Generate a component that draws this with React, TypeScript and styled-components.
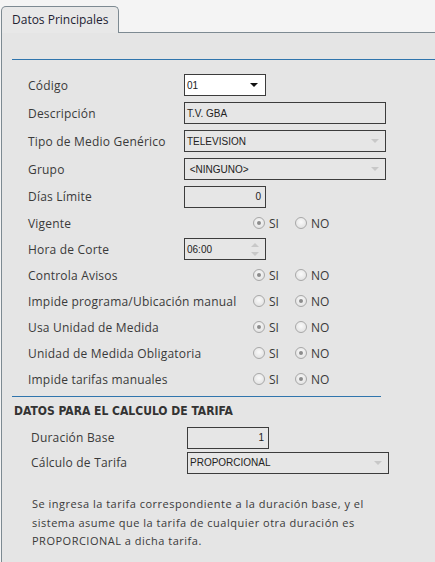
import React from 'react';
import styled, { createGlobalStyle } from 'styled-components';

const GlobalStyle = createGlobalStyle`
  html, body {
    margin: 0;
    padding: 0;
    background: #f4f4f4;
  }
  body {
    font-family: 'Open Sans', 'Liberation Sans', sans-serif;
    color: #333;
    width: 435px;
    height: 562px;
    overflow: hidden;
  }
`;

const TabStrip = styled.div`
  height: 32px;
  display: flex;
  align-items: flex-end;
  padding-left: 1px;
`;

const Tab = styled.div`
  width: 118px;
  height: 27px;
  box-sizing: border-box;
  border: 1px solid #7d8a92;
  border-bottom: none;
  border-radius: 5px 5px 0 0;
  background: #e8e8e8;
  font-size: 12px;
  color: #222233;
  padding: 4px 0 0 10px;
  position: relative;
  top: 1px;
`;

const Panel = styled.div`
  margin-left: 1px;
  border-left: 1px solid #7d8a92;
  border-top: 1px solid #7d8a92;
  background: #e5e5e5;
  height: 530px;
  box-sizing: border-box;
  padding: 26px 0 0 10px;
`;

const Rule = styled.div<{ $width?: number }>`
  height: 1px;
  background: #3075ad;
  width: ${({ $width }) => ($width ? `${$width}px` : '100%')};
`;

const Form = styled.div<{ $indent: number }>`
  padding-left: ${({ $indent }) => $indent}px;
`;

const Row = styled.div<{ $h: number; $label?: number }>`
  display: grid;
  grid-template-columns: ${({ $label }) => $label ?? 156}px 1fr;
  align-items: center;
  height: ${({ $h }) => $h}px;
`;

const Label = styled.span`
  font-size: 12px;
  color: #3a3a3a;
  white-space: nowrap;
  letter-spacing: 0.2px;
`;

const Box = styled.div<{ $w: number; $white?: boolean; $right?: boolean }>`
  width: ${({ $w }) => $w}px;
  height: 22px;
  box-sizing: border-box;
  border: 1px solid #3c3c3c;
  background: ${({ $white }) => ($white ? '#fff' : '#e6e6e6')};
  font-family: 'Liberation Sans', Arial, sans-serif;
  font-size: 10px;
  color: #222;
  display: flex;
  align-items: center;
  justify-content: ${({ $right }) => ($right ? 'flex-end' : 'space-between')};
  padding: 0 4px 0 2px;
`;

const Caret = styled.span<{ $dark?: boolean }>`
  width: 0;
  height: 0;
  border-left: 4px solid transparent;
  border-right: 4px solid transparent;
  border-top: 4px solid ${({ $dark }) => ($dark ? '#111' : '#c8c8c8')};
  margin-right: ${({ $dark }) => ($dark ? '3px' : '2px')};
`;

const Spinner = styled.span`
  display: flex;
  flex-direction: column;
  gap: 5px;
  margin-right: 2px;
  &::before, &::after {
    content: '';
    width: 0;
    height: 0;
    border-left: 4px solid transparent;
    border-right: 4px solid transparent;
  }
  &::before {
    border-bottom: 4px solid #c8c8c8;
  }
  &::after {
    border-top: 4px solid #c8c8c8;
  }
`;

const Radios = styled.div`
  display: flex;
  align-items: center;
  padding-left: 69px;
`;

const Option = styled.label`
  display: flex;
  align-items: center;
  gap: 4px;
  font-size: 12px;
  color: #3a3a3a;
  width: 42px;
`;

const Dot = styled.span<{ $on?: boolean }>`
  width: 12px;
  height: 12px;
  box-sizing: border-box;
  border-radius: 50%;
  border: 1px solid #a8a8a8;
  background: radial-gradient(circle at 50% 40%, #fafafa, #dcdcdc);
  display: flex;
  align-items: center;
  justify-content: center;
  &::after {
    content: '';
    width: 4px;
    height: 4px;
    border-radius: 50%;
    background: ${({ $on }) => ($on ? '#8c8c8c' : 'transparent')};
  }
`;

const Heading = styled.h3`
  margin: 4px 0 3px 2px;
  font-family: 'DejaVu Sans Condensed', 'Liberation Sans', sans-serif;
  font-size: 12px;
  font-weight: bold;
  color: #333;
  height: 21px;
  line-height: 21px;
`;

const Note = styled.p`
  margin: 20px 0 0 20px;
  font-size: 11px;
  line-height: 18.5px;
  color: #3a3a3a;
  width: 340px;
  letter-spacing: 0.5px;
`;

const YesNo = ({ yes }: { yes: boolean }) => (
  <Radios>
    <Option>
      <Dot $on={yes} />
      SI
    </Option>
    <Option>
      <Dot $on={!yes} />
      NO
    </Option>
  </Radios>
);

const radioRows: [string, boolean][] = [
  ['Controla Avisos', true],
  ['Impide programa/Ubicación manual', false],
  ['Usa Unidad de Medida', true],
  ['Unidad de Medida Obligatoria', false],
  ['Impide tarifas manuales', false],
];

export default function App() {
  return (
    <>
      <GlobalStyle />
      <TabStrip>
        <Tab>Datos Principales</Tab>
      </TabStrip>
      <Panel>
        <Rule />
        <Form $indent={16} style={{ marginTop: 11 }}>
          <Row $h={28}>
            <Label>Código</Label>
            <Box $w={82} $white>
              01
              <Caret $dark />
            </Box>
          </Row>
          <Row $h={28}>
            <Label>Descripción</Label>
            <Box $w={202}>T.V. GBA</Box>
          </Row>
          <Row $h={28}>
            <Label>Tipo de Medio Genérico</Label>
            <Box $w={202}>
              TELEVISION
              <Caret />
            </Box>
          </Row>
          <Row $h={28}>
            <Label>Grupo</Label>
            <Box $w={202}>
              &nbsp;&lt;NINGUNO&gt;
              <Caret />
            </Box>
          </Row>
          <Row $h={27}>
            <Label>Días Límite</Label>
            <Box $w={82} $right>
              0
            </Box>
          </Row>
          <Row $h={26}>
            <Label>Vigente</Label>
            <YesNo yes />
          </Row>
          <Row $h={26}>
            <Label>Hora de Corte</Label>
            <Box $w={82}>
              06:00
              <Spinner />
            </Box>
          </Row>
          {radioRows.map(([label, yes]) => (
            <Row $h={26} key={label}>
              <Label>{label}</Label>
              <YesNo yes={yes} />
            </Row>
          ))}
        </Form>
        <div style={{ marginTop: 4 }}>
          <Rule $width={369} />
        </div>
        <Heading>DATOS PARA EL CALCULO DE TARIFA</Heading>
        <Form $indent={19}>
          <Row $h={25}>
            <Label>Duración Base</Label>
            <Box $w={82} $right>
              1
            </Box>
          </Row>
          <Row $h={25}>
            <Label>Cálculo de Tarifa</Label>
            <Box $w={202}>
              PROPORCIONAL
              <Caret />
            </Box>
          </Row>
        </Form>
        <Note>
          Se ingresa la tarifa correspondiente a la duración base, y el sistema asume que la
          tarifa de cualquier otra duración es PROPORCIONAL a dicha tarifa.
        </Note>
      </Panel>
    </>
  );
}
